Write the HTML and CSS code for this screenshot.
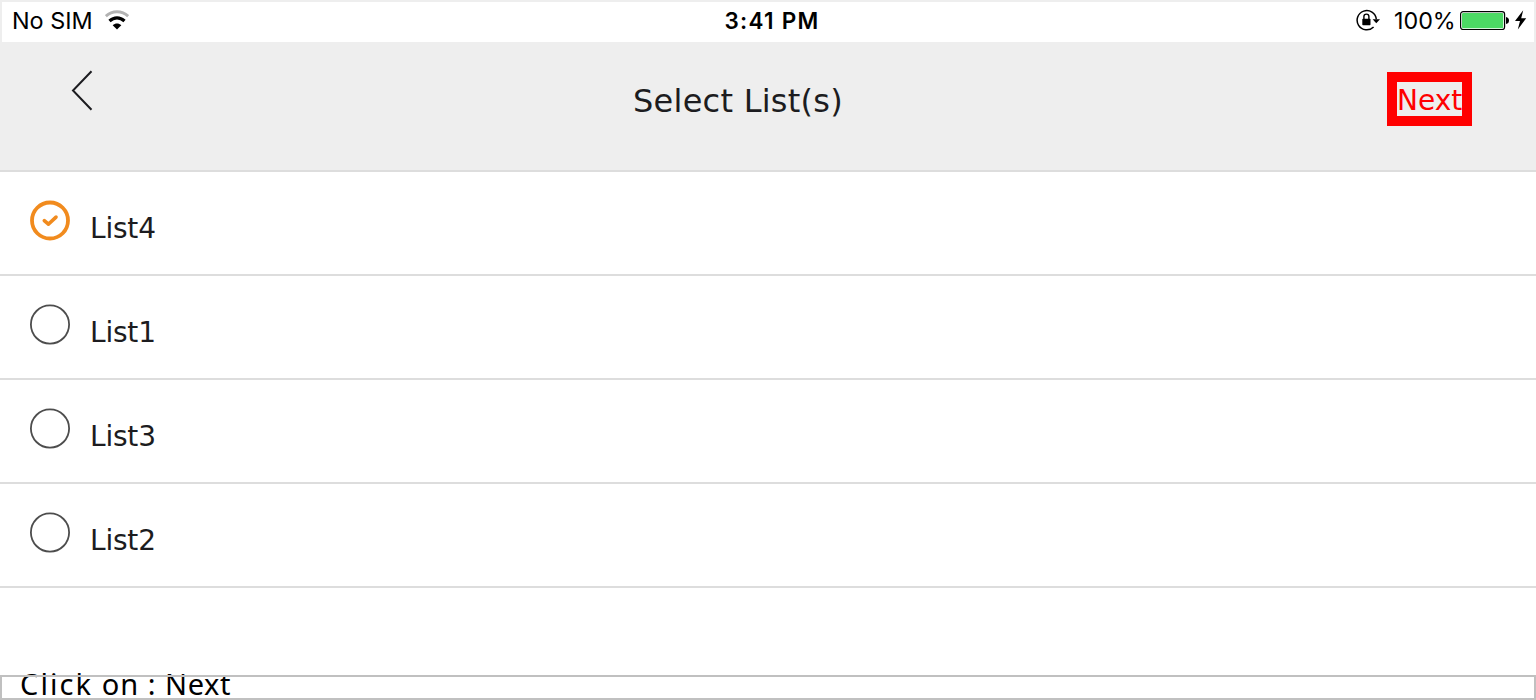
FILE: index.html
```html
<!DOCTYPE html>
<html lang="en">
<head>
<meta charset="utf-8">
<title>Select List(s)</title>
<link rel="stylesheet" href="styles.css">
</head>
<body>
<div class="status">
  <span class="carrier">No SIM</span>
  <svg class="wifi" width="24" height="20" viewBox="0 0 24 20" fill="none">
    <path d="M.8 6.2C7 .2 17 .2 23.2 6.2" stroke="#b3b3b3" stroke-width="3"/>
    <path d="M4.5 11C9 6.8 15 6.8 19.5 11" stroke="#000" stroke-width="3.2"/>
    <path d="M12 19.4L7.7 15.2C10.2 12.9 13.8 12.9 16.3 15.2Z" fill="#000"/>
  </svg>
  <span class="time">3:41 PM</span>
  <svg class="lock" width="24" height="22" viewBox="0 0 24 22" fill="none">
    <path d="M17.6 17.9A9.6 9.6 0 1 1 20.3 10.3" stroke="#000" stroke-width="1.5"/>
    <path d="M16.6 10.2H24L20.3 14.2Z" fill="#000"/>
    <rect x="6.3" y="9.8" width="8.2" height="6.4" rx=".7" fill="#000"/>
    <path d="M7.9 10V7.6A2.5 2.5 0 0 1 12.9 7.6V10" stroke="#000" stroke-width="1.4"/>
  </svg>
  <span class="percent">100%</span>
  <svg class="battery" width="50" height="20" viewBox="0 0 50 20">
    <rect x=".6" y="1.6" width="44" height="18" rx="2.6" fill="#fff" stroke="#000" stroke-width="1.2"/>
    <rect x="2" y="3" width="41.2" height="15.2" rx="1.2" fill="#4cd964"/>
    <path d="M46 7Q49 7.5 49 10.5T46 14Z" fill="#000"/>
  </svg>
  <svg class="bolt" width="12" height="22" viewBox="0 0 12 22">
    <path d="M8.2 1.2L0 12H5L2.8 20.4L11.2 9.2H6.2Z" fill="#000"/>
  </svg>
</div>
<header class="header">
  <svg class="back" width="22" height="42" viewBox="0 0 22 42" fill="none">
    <path d="M20.5 1.2L2 20.5L20.5 39.8" stroke="#1c1c20" stroke-width="2"/>
  </svg>
  <h1 class="title">Select List(s)</h1>
  <div class="next">Next</div>
</header>
<main class="rows">
  <div class="row">
    <svg class="mark" width="42" height="42" viewBox="0 0 42 42" fill="none" stroke="#f18b1e">
      <circle cx="21" cy="20.5" r="18" stroke-width="3.8"/>
      <path d="M15.3 20.6L19.4 24.2L27 17.1" stroke-width="3.6" stroke-linecap="round" stroke-linejoin="round"/>
    </svg>
    <span class="label">List4</span>
  </div>
  <div class="row">
    <svg class="mark" width="42" height="42" viewBox="0 0 42 42"><circle cx="21" cy="20.5" r="19.1" fill="none" stroke="#4d4d4d" stroke-width="1.8"/></svg>
    <span class="label">List1</span>
  </div>
  <div class="row">
    <svg class="mark" width="42" height="42" viewBox="0 0 42 42"><circle cx="21" cy="20.5" r="19.1" fill="none" stroke="#4d4d4d" stroke-width="1.8"/></svg>
    <span class="label">List3</span>
  </div>
  <div class="row">
    <svg class="mark" width="42" height="42" viewBox="0 0 42 42"><circle cx="21" cy="20.5" r="19.1" fill="none" stroke="#4d4d4d" stroke-width="1.8"/></svg>
    <span class="label">List2</span>
  </div>
</main>
<footer class="caption"><span class="hint"><span class="verb">Click</span> on : <span class="target">Next</span></span></footer>
</body>
</html>
```
FILE: styles.css
```css
* { box-sizing: border-box; }
body {
  margin: 0;
  height: 700px;
  overflow: hidden;
  display: flex;
  flex-direction: column;
  background: #fff;
  color: #1c1c20;
  font-family: "DejaVu Sans", sans-serif;
}
.status {
  height: 42px;
  border: 2px solid #eee;
  border-bottom: 0;
  display: flex;
  align-items: flex-start;
  color: #000;
  font: 24px/38px Inter, sans-serif;
  white-space: nowrap;
}
.carrier { flex: none; width: 93px; padding-left: 10px; font-size: 23.4px; }
.wifi { flex: none; margin: 8px 0 0 9.5px; }
.time { flex: none; margin-left: 596px; width: 632px; font-weight: 600; font-size: 22.5px; letter-spacing: 1.25px; }
.lock { flex: none; margin-top: 7px; margin-left: -.5px; }
.percent { flex: none; width: 66px; margin-left: 14px; font-size: 23.3px; }
.battery { flex: none; margin-top: 8px; }
.bolt { flex: none; margin: 7px 0 0 5px; }
.header {
  height: 130px;
  background: #eee;
  border-bottom: 2px solid #ddd;
  display: flex;
}
.back { margin: 28px 0 0 71px; }
.title {
  margin: 39px 0 0 540px;
  width: 754px;
  font-size: 32px;
  line-height: 40px;
  letter-spacing: .25px;
  font-weight: 400;
  white-space: nowrap;
}
.next {
  margin-top: 30px;
  width: 85px;
  height: 54px;
  border: 10px solid #f00;
  color: #f00;
  font-size: 28px;
  line-height: 37px;
}
.row {
  height: 104px;
  border-bottom: 2px solid #ddd;
  display: flex;
  padding-left: 29px;
}
.mark { margin-top: 28px; }
.label {
  margin: 37px 0 0 19px;
  font-size: 28px;
  line-height: 40px;
  letter-spacing: -.2px;
}
.caption {
  position: relative;
  margin-top: auto;
  height: 34px;
  padding-left: 20px;
}
/* The frame runs across the tops of the caption's letters. */
.caption::after {
  content: "";
  position: absolute;
  inset: 9px 0 0;
  border: 2px solid #c0c0c0;
}
.hint {
  display: block;
  color: #000;
  font: 29px/36px "Noto Sans", sans-serif;
  letter-spacing: 1px;
  white-space: nowrap;
}
.verb { letter-spacing: 2.1px; }
.target { letter-spacing: .6px; }
```
